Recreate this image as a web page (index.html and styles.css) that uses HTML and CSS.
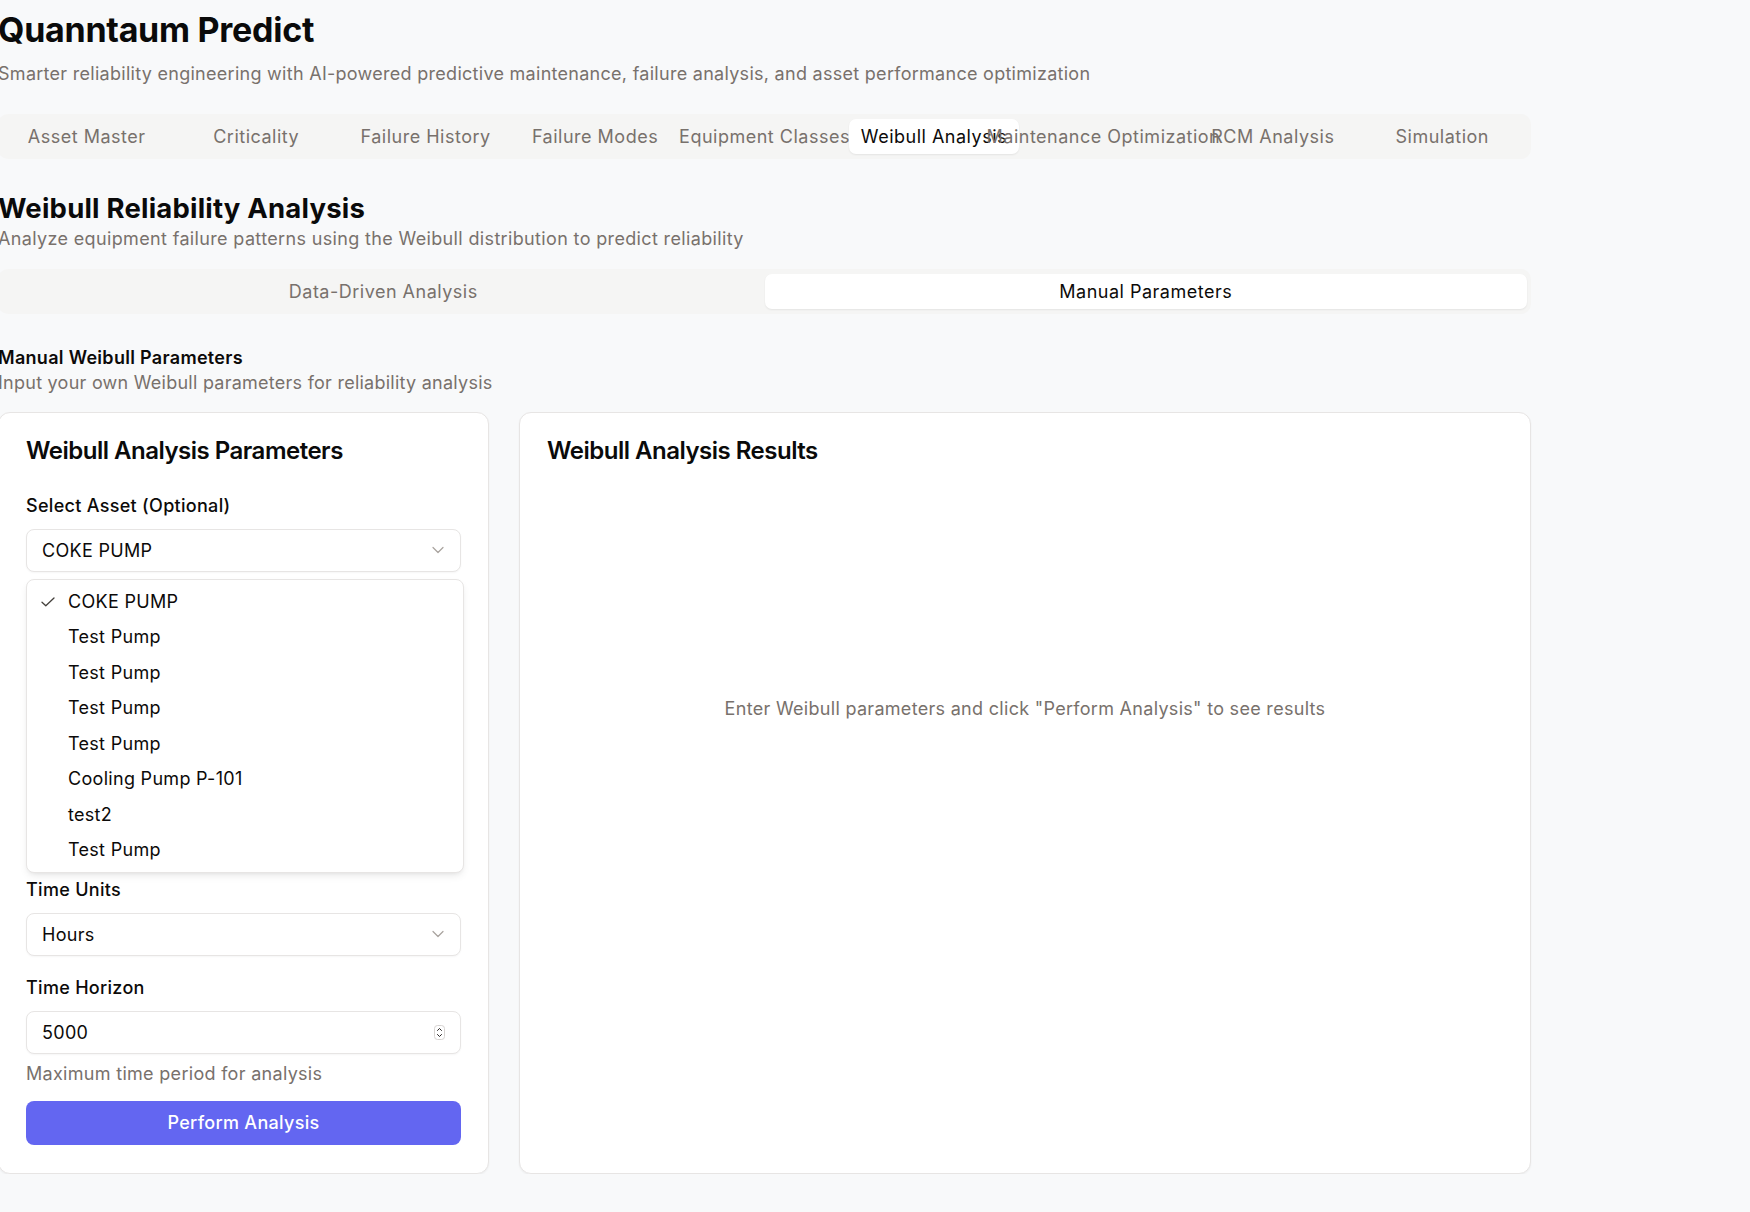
FILE: index.html
```html
<!DOCTYPE html>
<html lang="en">
<head>
<meta charset="utf-8">
<title>Quanntaum Predict</title>
<link rel="stylesheet" href="styles.css">
</head>
<body>
<main class="page">
  <header class="app-header">
    <h1 class="app-title">Quanntaum Predict</h1>
    <p class="app-subtitle">Smarter reliability engineering with AI-powered predictive maintenance, failure analysis, and asset performance optimization</p>
  </header>

  <nav class="tab-list main-tabs">
    <span class="tab">Asset Master</span>
    <span class="tab">Criticality</span>
    <span class="tab">Failure History</span>
    <span class="tab">Failure Modes</span>
    <span class="tab">Equipment Classes</span>
    <span class="tab active">Weibull Analysis</span>
    <span class="tab">Maintenance Optimization</span>
    <span class="tab">RCM Analysis</span>
    <span class="tab">Simulation</span>
  </nav>

  <section class="weibull">
    <h2 class="section-title">Weibull Reliability Analysis</h2>
    <p class="section-desc">Analyze equipment failure patterns using the Weibull distribution to predict reliability</p>

    <div class="tab-list mode-tabs">
      <span class="tab">Data-Driven Analysis</span>
      <span class="tab active">Manual Parameters</span>
    </div>

    <div class="panel-head">
      <h3 class="panel-title">Manual Weibull Parameters</h3>
      <p class="panel-desc">Input your own Weibull parameters for reliability analysis</p>
    </div>

    <div class="grid">
      <div class="card">
        <h4 class="card-title">Weibull Analysis Parameters</h4>
        <div class="form">
          <div class="fields">
            <div class="field">
              <span class="label">Select Asset (Optional)</span>
              <div class="control">
                <span>COKE PUMP</span>
                <svg class="chev" width="12" height="8" viewBox="0 0 12 8"><path d="M1 1.5l5 5 5-5" fill="none" stroke="#a8a29e" stroke-width="1.2" stroke-linecap="round" stroke-linejoin="round"/></svg>
              </div>
              <div class="menu">
                <div class="menu-item selected">
                  <svg class="check" width="14" height="10" viewBox="0 0 14 10"><path d="M1 5.2l3.8 3.6L13 1" fill="none" stroke="#44403c" stroke-width="1.3" stroke-linecap="round" stroke-linejoin="round"/></svg>
                  <span>COKE PUMP</span>
                </div>
                <div class="menu-item"><span>Test Pump</span></div>
                <div class="menu-item"><span>Test Pump</span></div>
                <div class="menu-item"><span>Test Pump</span></div>
                <div class="menu-item"><span>Test Pump</span></div>
                <div class="menu-item"><span>Cooling Pump P-101</span></div>
                <div class="menu-item"><span>test2</span></div>
                <div class="menu-item"><span>Test Pump</span></div>
              </div>
            </div>

            <div class="param-group" aria-hidden="true"></div>

            <div class="field">
              <span class="label">Time Units</span>
              <div class="control">
                <span>Hours</span>
                <svg class="chev" width="12" height="8" viewBox="0 0 12 8"><path d="M1 1.5l5 5 5-5" fill="none" stroke="#a8a29e" stroke-width="1.2" stroke-linecap="round" stroke-linejoin="round"/></svg>
              </div>
            </div>

            <div class="field">
              <span class="label">Time Horizon</span>
              <div class="control">
                <span>5000</span>
                <svg class="spin" width="11" height="15" viewBox="0 0 11 15"><rect x="0.5" y="0.5" width="10" height="14" rx="3" fill="#fff" stroke="#d6d3d1"/><path d="M3.5 5.5l2-2 2 2M3.5 9.5l2 2 2-2" fill="none" stroke="#292524" stroke-width="1" stroke-linecap="round" stroke-linejoin="round"/></svg>
              </div>
              <span class="hint">Maximum time period for analysis</span>
            </div>
          </div>
          <button class="btn" type="button">Perform Analysis</button>
        </div>
      </div>

      <div class="card card-wide">
        <h4 class="card-title">Weibull Analysis Results</h4>
        <div class="empty">Enter Weibull parameters and click "Perform Analysis" to see results</div>
      </div>
    </div>
  </section>
</main>
</body>
</html>
```

FILE: styles.css
```css
* { box-sizing: border-box; }

html, body { margin: 0; }

body {
  background: #f8f9fa;
  font-family: Inter, "Noto Sans", "Liberation Sans", sans-serif;
  color: #0c0a09;
}

.page {
  width: 1533px;
  margin-left: -2px;
  padding-top: 10px;
}

.app-title {
  margin: 0;
  font-size: 34px;
  line-height: 40px;
  font-weight: 700;
  letter-spacing: -0.27px;
  color: #0a0a0a;
}

.app-subtitle {
  margin: 10px 0 0;
  font-size: 18px;
  line-height: 28px;
  letter-spacing: 0.28px;
  color: #78716c;
}

.tab-list {
  height: 45px;
  padding: 5px 4px;
  background: #f5f5f4;
  border-radius: 10px;
  display: grid;
}

.main-tabs {
  margin-top: 26px;
  grid-template-columns: repeat(9, minmax(0, 1fr));
}

.mode-tabs {
  margin-top: 18px;
  grid-template-columns: repeat(2, minmax(0, 1fr));
}

.tab {
  display: flex;
  align-items: center;
  justify-content: center;
  white-space: nowrap;
  min-width: 0;
  font-size: 18px;
  letter-spacing: 0.5px;
  color: #78716c;
  border-radius: 7px;
}

.tab.active {
  background: #ffffff;
  color: #0c0a09;
  box-shadow: 0 1px 2px rgba(0, 0, 0, 0.07);
}

.section-title {
  margin: 33px 0 0;
  font-size: 27.5px;
  line-height: 32px;
  font-weight: 700;
  letter-spacing: 0.2px;
  color: #0a0a0a;
}

.section-desc {
  margin: 3px 0 0;
  font-size: 18px;
  line-height: 24px;
  letter-spacing: 0.35px;
  color: #78716c;
}

.panel-head {
  margin-top: 32px;
}

.panel-title {
  margin: 0;
  font-size: 18px;
  line-height: 24px;
  font-weight: 600;
  letter-spacing: 0.3px;
}

.panel-desc {
  margin: 1px 0 0;
  font-size: 18px;
  line-height: 24px;
  letter-spacing: 0.25px;
  color: #78716c;
}

.grid {
  margin-top: 17px;
  display: grid;
  grid-template-columns: repeat(3, minmax(0, 1fr));
  gap: 30px;
}

.card {
  background: #ffffff;
  border: 1px solid #e7e5e4;
  border-radius: 12px;
  box-shadow: 0 1px 2px rgba(0, 0, 0, 0.05);
  padding: 23px 27px 28px;
}

.card-wide {
  grid-column: span 2;
}

.card-title {
  margin: 0;
  font-size: 24px;
  line-height: 30px;
  font-weight: 600;
  letter-spacing: -0.5px;
  color: #0a0a0a;
}

.form {
  margin-top: 29.6px;
  display: flex;
  flex-direction: column;
}

.fields {
  display: flex;
  flex-direction: column;
  gap: 22px;
}

/* area of the parameter inputs, covered here by the open asset menu */
.param-group {
  height: 264px;
}

.field {
  position: relative;
  display: flex;
  flex-direction: column;
}

.label {
  font-size: 18px;
  line-height: 20px;
  font-weight: 500;
  letter-spacing: 0.3px;
}

.control {
  margin-top: 13px;
  height: 43px;
  border: 1px solid #e7e5e4;
  border-radius: 8px;
  background: #ffffff;
  box-shadow: 0 1px 2px rgba(0, 0, 0, 0.04);
  padding: 0 15px;
  display: flex;
  align-items: center;
  justify-content: space-between;
  font-size: 18px;
  letter-spacing: 0.3px;
}

.chev { margin-right: 1px; }

.spin { margin-right: 0; }

.hint {
  margin-top: 8px;
  font-size: 18px;
  line-height: 24px;
  letter-spacing: 0.3px;
  color: #78716c;
}

.btn {
  margin-top: 15px;
  height: 44px;
  border: 0;
  border-radius: 8px;
  background: #6366f1;
  color: #ffffff;
  font-family: inherit;
  font-size: 18px;
  letter-spacing: 0.3px;
  font-weight: 500;
}

.menu {
  position: absolute;
  top: calc(100% + 7px);
  left: 0;
  width: 438px;
  z-index: 10;
  background: #ffffff;
  border: 1px solid #e7e5e4;
  border-radius: 8px;
  box-shadow: 0 4px 8px -2px rgba(0, 0, 0, 0.1), 0 2px 4px -2px rgba(0, 0, 0, 0.06);
  padding: 4px;
}

.menu-item {
  position: relative;
  height: 35.5px;
  display: flex;
  align-items: center;
  padding-left: 37px;
  font-size: 18px;
  letter-spacing: 0.3px;
  color: #0c0a09;
}

.check {
  position: absolute;
  left: 10px;
  top: 13px;
}

.empty {
  margin-top: 29.6px;
  height: 425px;
  display: flex;
  align-items: center;
  justify-content: center;
  font-size: 18px;
  letter-spacing: 0.3px;
  color: #78716c;
}
```
